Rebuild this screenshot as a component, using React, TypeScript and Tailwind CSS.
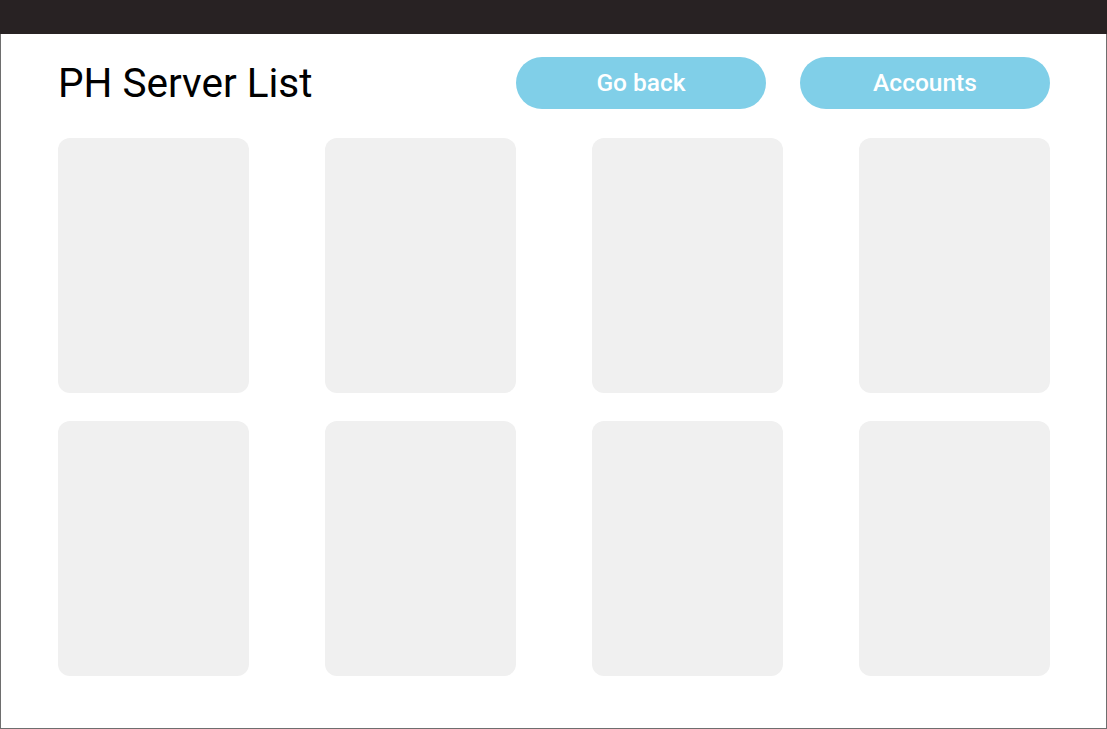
import React from "react";

export default function App() {
  const cards = Array.from({ length: 8 });
  return (
    <div
      className="flex h-[729px] w-[1107px] flex-col bg-white"
      style={{ fontFamily: "Roboto, 'Liberation Sans', sans-serif" }}
    >
      <div className="h-[34px] w-full shrink-0 bg-[#282223]" />
      <div className="flex flex-1 flex-col border-x border-b border-[#6e6e6e] pr-[56px] pl-[57px] pt-[23px]">
        <div className="flex h-[52px] items-center justify-between">
          <h1 className="text-[40.5px] leading-none font-normal text-black">PH Server List</h1>
          <div className="flex gap-[34px]">
            <button className="flex h-[52px] w-[250px] items-center justify-center rounded-full bg-[#80cfe8] pt-[1px] text-[24.5px] font-medium text-white">
              Go back
            </button>
            <button className="flex h-[52px] w-[250px] items-center justify-center rounded-full bg-[#80cfe8] pt-[1px] text-[24.5px] font-medium text-white">
              Accounts
            </button>
          </div>
        </div>
        <div className="mt-[29px] grid grid-cols-[191px_191px_191px_191px] justify-between gap-y-[28px]">
          {cards.map((_, i) => (
            <div key={i} className="h-[255px] w-[191px] rounded-[12px] bg-[#f0f0f0]" />
          ))}
        </div>
      </div>
    </div>
  );
}
